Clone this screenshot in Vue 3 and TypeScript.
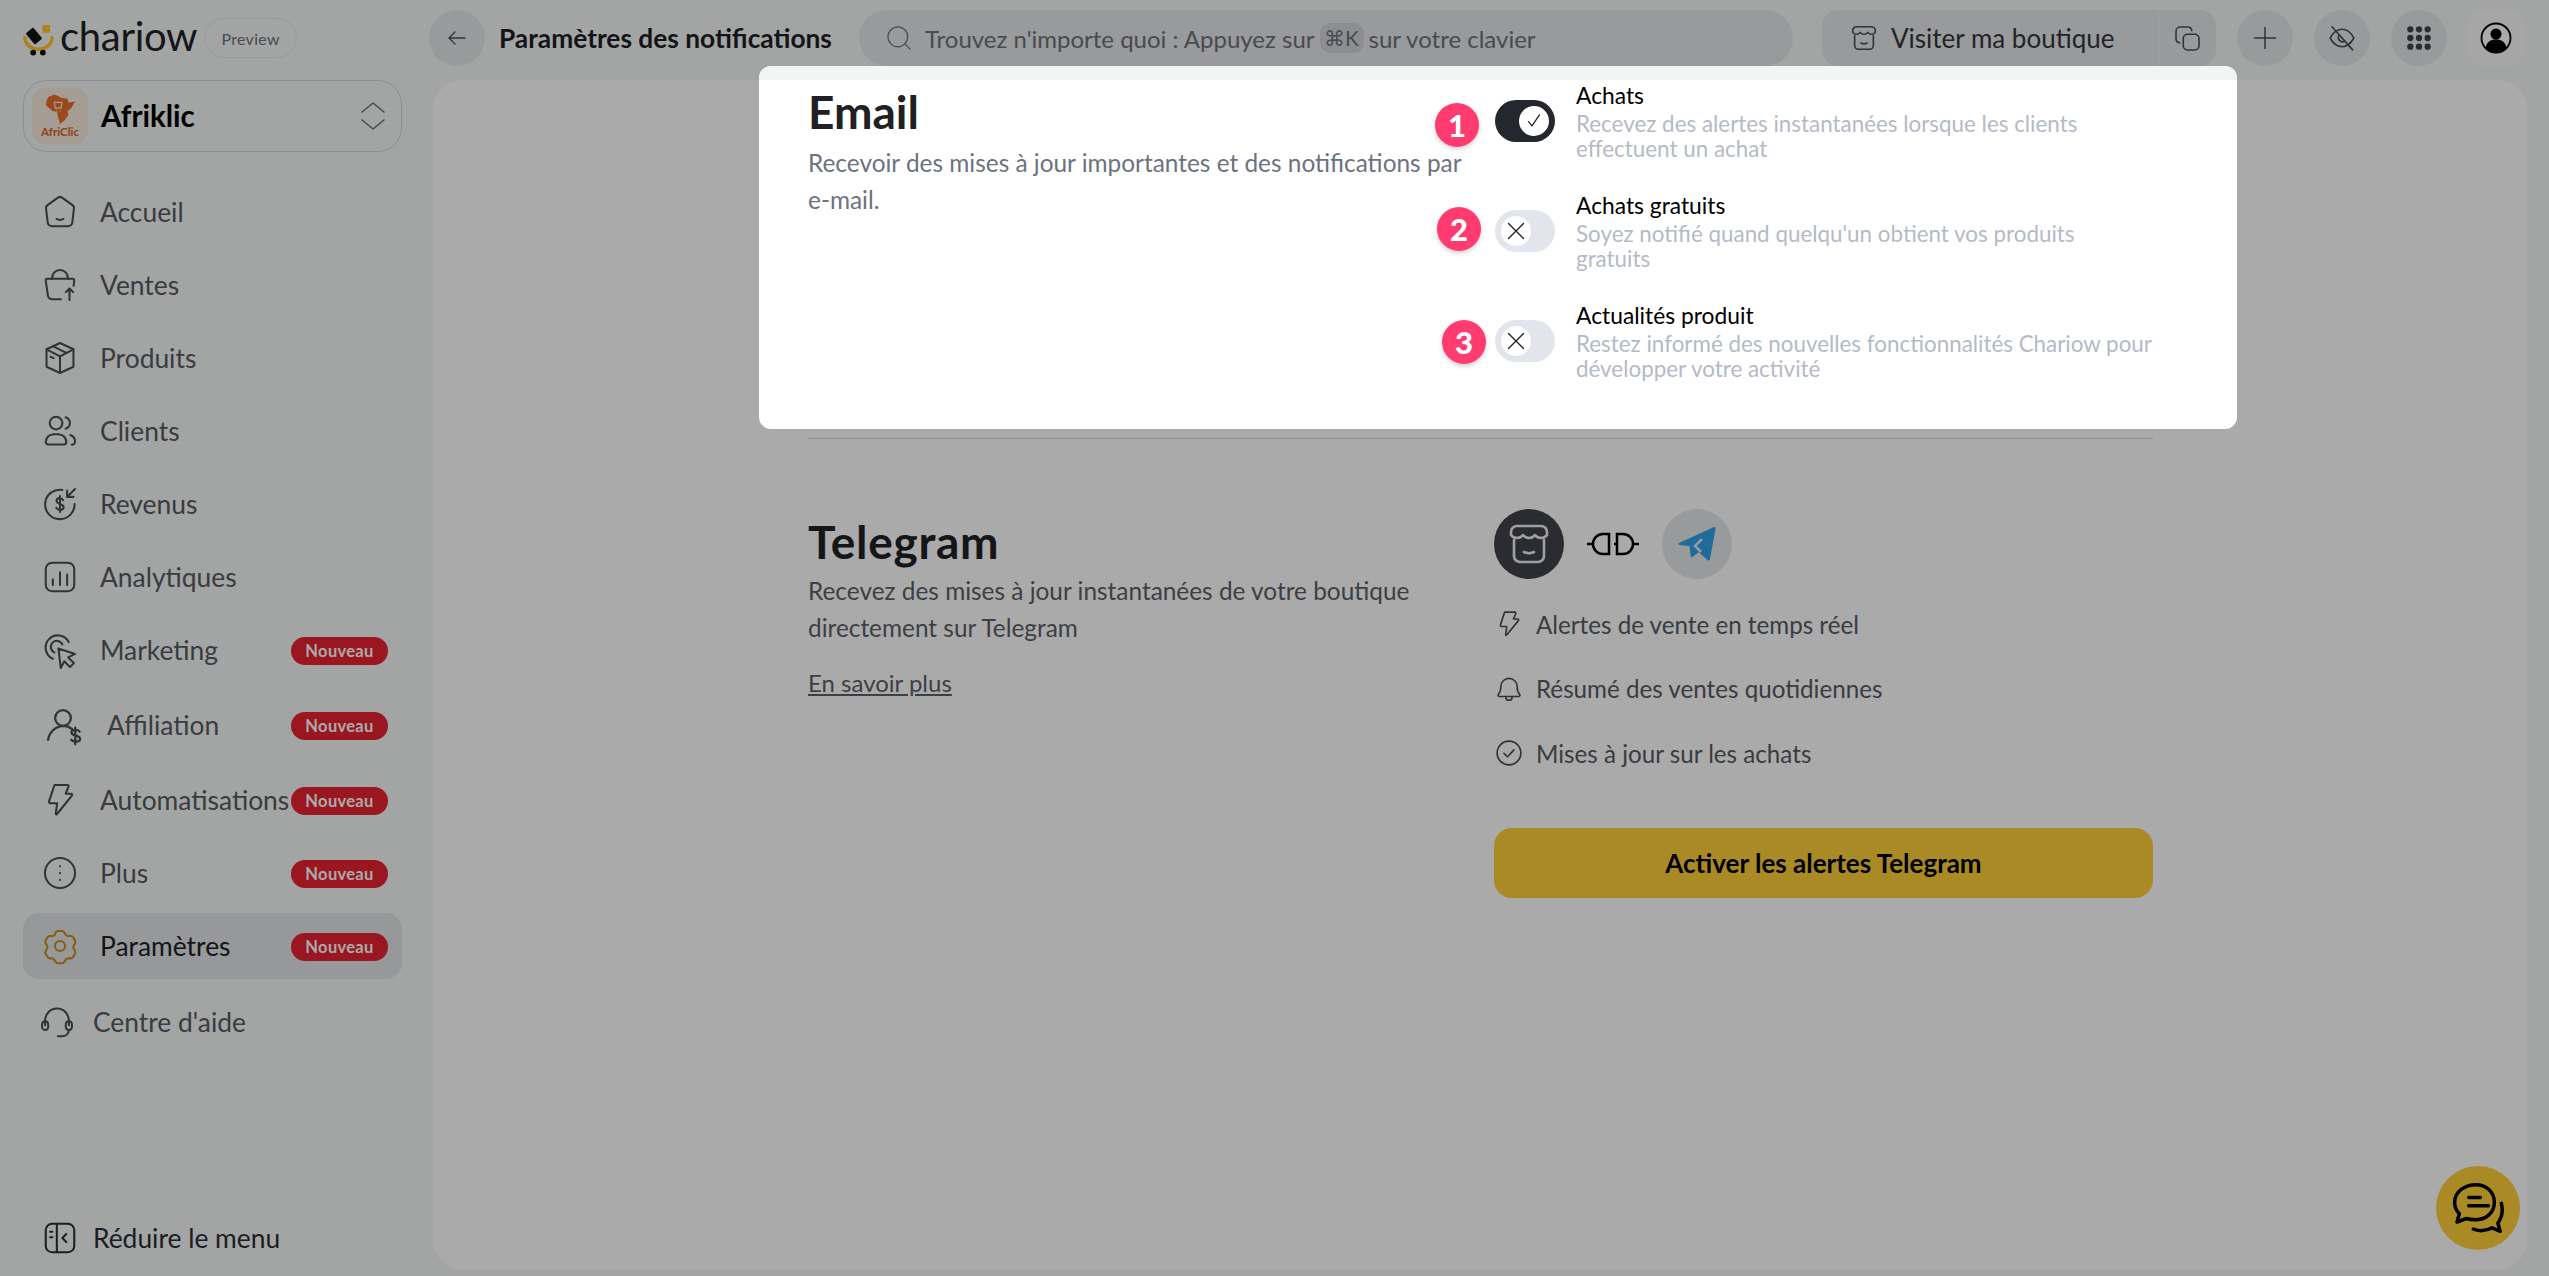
<script setup lang="ts">
interface NavItem {
  label: string
  icon: string[]
  badge?: boolean
  active?: boolean
  cls?: string
}

const nav: NavItem[] = [
  { label: 'Accueil', icon: ['M10.7 2.9a2.2 2.2 0 0 1 2.6 0l6.6 4.8a2.2 2.2 0 0 1 .9 2.1l-1 8.6a2.8 2.8 0 0 1-2.8 2.6H7a2.8 2.8 0 0 1-2.8-2.6l-1-8.6a2.2 2.2 0 0 1 .9-2.1z', 'M9.8 16.4c1.4.8 3 .8 4.4 0'] },
  { label: 'Ventes', icon: ['M12.5 21H7.3a3 3 0 0 1-3-2.6L3 9.2A1 1 0 0 1 4 8h16a1 1 0 0 1 1 1.1l-.4 3.4', 'M7 8c0-3.2 2-5.5 5-5.5S17 4.800 17 8', 'M18 21.500v-7M15.700 16.500l2.300-2.300 2.300 2.300'] },
  { label: 'Produits', icon: ['M12 2.500l8.500 4v11L12 21.500l-8.500-4v-11z', 'M3.500 6.500L12 11l8.500-4.500', 'M12 11v10.500', 'M7.500 4.500L16 8.800', 'M6 11.200l2 .9'] },
  { label: 'Clients', icon: ['M9.500 3a4 4 0 1 1 0 8 4 4 0 0 1 0-8z', 'M15.500 3.300a3.800 3.800 0 0 1 0 7.300', 'M8 14h3a5 5 0 0 1 5 5 1.500 1.500 0 0 1-1.500 1.500h-10A1.500 1.500 0 0 1 3 19a5 5 0 0 1 5-5z', 'M18.500 14.500a4.500 4.500 0 0 1 3 4.500 1.800 1.800 0 0 1-2 1.600'] },
  { label: 'Revenus', icon: ['M13.500 3.100A9.300 9.300 0 1 0 21.200 12', 'M21.500 2.500l-5 5M16.500 3.500v4h4', 'M14 9.600c-.5-1-1.200-1.300-2-1.300-1.300 0-2.200.7-2.200 1.700 0 2.500 4.500 1.400 4.500 4 0 1.100-1 1.700-2.300 1.700-1 0-1.800-.4-2.300-1.300M12 7v10'] },
  { label: 'Analytiques', icon: ['M7 3h10a4 4 0 0 1 4 4v10a4 4 0 0 1-4 4H7a4 4 0 0 1-4-4V7a4 4 0 0 1 4-4z', 'M7.500 13.500V17M12 9v8M16.500 10.500V17'] },
  { label: 'Marketing', badge: true, icon: ['M7.500 17.500A7.700 7.700 0 1 1 17.500 7', 'M8.500 13.500A3.800 3.800 0 1 1 13.500 8.500', 'M11 11l10.500 3.500-4.300 2.200 3.600 3.600-2.500 2.500-3.600-3.700-2.200 4.300z'] },
  { label: 'Affiliation', badge: true, cls: 'aff', icon: ['M12 3.500a4.500 4.500 0 1 1 0 9 4.500 4.500 0 0 1 0-9z', 'M3.500 20.500c.6-4.300 4-7.700 8.500-8 2 0 3.800.6 5.200 1.800', 'M21.500 15.800c-.6-.8-1.400-1-2.400-1-1.300 0-2.300.5-2.300 1.500 0 2.300 5 1.200 5 3.600 0 1-1.100 1.600-2.500 1.600-1 0-2-.3-2.600-1.100M19 13.500v9.500'] },
  { label: 'Automatisations', badge: true, icon: ['M8.500 2.500h8.200a.8.8 0 0 1 .7 1.100l-1.800 4.400h3.300a.8.8 0 0 1 .6 1.300L10 21a.4.4 0 0 1-.7-.3l.9-6.700H5.800a.8.8 0 0 1-.7-1.100z'] },
  { label: 'Plus', badge: true, icon: ['M12 2.500a9.500 9.500 0 1 1 0 19 9.500 9.500 0 0 1 0-19z', 'M12 7.700v.1M12 12v.1M12 16.300v.1'] },
  { label: 'Paramètres', badge: true, active: true, icon: ['M12 8.800a3.200 3.200 0 1 1 0 6.400 3.200 3.200 0 0 1 0-6.400z', 'M9.300 3.400c.4-.6 1-.9 1.600-.9h2.200c.6 0 1.200.3 1.600.9l.9 1.500c.3.500.9.800 1.500.8h1.700c.7 0 1.300.4 1.600 1l1.100 1.900c.3.600.3 1.300 0 1.800l-.9 1.500c-.3.500-.3 1.200 0 1.700l.9 1.500c.3.600.3 1.300 0 1.800l-1.100 1.900c-.3.600-.9 1-1.600 1h-1.700c-.6 0-1.200.3-1.500.8l-.9 1.400c-.4.600-1 .9-1.600.9h-2.200c-.6 0-1.200-.3-1.600-.9l-.9-1.400c-.3-.5-.9-.8-1.500-.8H5.600c-.7 0-1.300-.4-1.600-1l-1.100-1.900c-.3-.5-.3-1.200 0-1.800l.9-1.500c.3-.5.3-1.200 0-1.700l-.9-1.500c-.3-.5-.3-1.200 0-1.800L4 6.700c.3-.6.900-1 1.600-1h1.700c.6 0 1.200-.3 1.500-.8z'] },
  { label: "Centre d'aide", cls: 'help', icon: ['M4.500 14V11a7.500 7.500 0 0 1 15 0v3', 'M4.500 11.500c1.300 0 2 1.200 2 2.800s-.7 2.700-2 2.700-2-1.200-2-2.700.7-2.800 2-2.800z', 'M19.500 11.500c1.300 0 2 1.200 2 2.800s-.7 2.700-2 2.700-2-1.200-2-2.700.7-2.800 2-2.800z', 'M19.500 17c0 2.700-2 4-4.500 4h-2.500'] },
]

const collapseIcon = ['M7 3h10a4 4 0 0 1 4 4v10a4 4 0 0 1-4 4H7a4 4 0 0 1-4-4V7a4 4 0 0 1 4-4z', 'M10 3v18', 'M5.800 8h1.400M5.800 11.500h1.400', 'M16 9.500L13.500 12l2.500 2.500']

const storeIcon = ['M3 7.500V6a3 3 0 0 1 3-3h12a3 3 0 0 1 3 3v1.500c-1.500 2-4.500 2-6 0-1.500 2-4.500 2-6 0-1.500 2-4.500 2-6 0z', 'M4.500 10v8a3 3 0 0 0 3 3h9a3 3 0 0 0 3-3v-8', 'M9.500 16c1.600.8 3.400.8 5 0']

interface EmailOption {
  n: number
  title: string
  lines: string[]
  on: boolean
  left: number
  top: number
}

const emailOptions: EmailOption[] = [
  { n: 1, title: 'Achats', lines: ['Recevez des alertes instantanées lorsque les clients', 'effectuent un achat'], on: true, left: -60, top: 22 },
  { n: 2, title: 'Achats gratuits', lines: ["Soyez notifié quand quelqu'un obtient vos produits", 'gratuits'], on: false, left: -58, top: 16 },
  { n: 3, title: 'Actualités produit', lines: ['Restez informé des nouvelles fonctionnalités Chariow pour', 'développer votre activité'], on: false, left: -53, top: 19 },
]

const features = [
  { label: 'Alertes de vente en temps réel', icon: ['M8.500 2.500h8.200a.8.8 0 0 1 .7 1.100l-1.800 4.400h3.300a.8.8 0 0 1 .6 1.300L10 21a.4.4 0 0 1-.7-.3l.9-6.700H5.800a.8.8 0 0 1-.7-1.100z'] },
  { label: 'Résumé des ventes quotidiennes', icon: ['M5.500 10a6.500 6.500 0 0 1 13 0c0 3.200.8 5 2 6.300.5.600.2 1.700-.7 1.700H4.200c-.9 0-1.200-1.100-.7-1.700 1.200-1.300 2-3.100 2-6.300z', 'M9.500 18.500a2.500 2.500 0 0 0 5 0'] },
  { label: 'Mises à jour sur les achats', icon: ['M12 2.500a9.500 9.500 0 1 1 0 19 9.500 9.500 0 0 1 0-19z', 'M8 12.300l2.800 2.700L16 9.500'] },
]
</script>

<template>
  <div class="app">
    <div class="brand">
      <svg class="brand-mark" viewBox="0 0 32 34" width="31" height="33">
        <path d="M2 14a14 12 0 0 0 28 0" fill="none" stroke="#ffc62c" stroke-width="3.600" stroke-linecap="round" />
        <rect x="6" y="5" width="10" height="15" rx="1" fill="#111" transform="rotate(-40 11 12)" />
        <rect x="20" y="1" width="8" height="8" fill="#ffc62c" />
        <circle cx="10.500" cy="29.500" r="3" fill="#111" />
        <circle cx="20.500" cy="29.500" r="3" fill="#111" />
      </svg>
      <span class="brand-name">chariow</span>
      <span class="preview">Preview</span>
    </div>

    <header class="topbar">
      <button class="round">
        <svg viewBox="0 0 24 24" width="24" height="24" class="ico"><path d="M20 12H4M10 6l-6 6 6 6" /></svg>
      </button>
      <div class="page-title">Paramètres des notifications</div>
      <div class="search">
        <svg viewBox="0 0 24 24" width="28" height="28" class="ico thin"><circle cx="11" cy="11" r="8.500" /><path d="M17.500 17.500l4 4" /></svg>
        <span>Trouvez n'importe quoi : Appuyez sur</span>
        <kbd>⌘K</kbd>
        <span>sur votre clavier</span>
      </div>
      <div class="shop">
        <div class="shop-main">
          <svg viewBox="0 0 24 24" width="30" height="30" class="ico"><path v-for="d in storeIcon" :key="d" :d="d" /></svg>
          <span>Visiter ma boutique</span>
        </div>
        <div class="shop-copy">
          <svg viewBox="0 0 24 24" width="29" height="29" class="ico"><rect x="8.500" y="8.500" width="13" height="13" rx="3.500" /><path d="M5.500 15.500A3 3 0 0 1 2.500 12.500V6A3.500 3.500 0 0 1 6 2.500h6.500a3 3 0 0 1 3 3" /></svg>
        </div>
      </div>
      <button class="round">
        <svg viewBox="0 0 24 24" width="28" height="28" class="ico"><path d="M12 3v18M3 12h18" /></svg>
      </button>
      <button class="round">
        <svg viewBox="0 0 24 24" width="30" height="30" class="ico"><path d="M2.500 12c2.500-4.500 5.700-7 9.500-7s7 2.500 9.500 7c-2.500 4.500-5.700 7-9.500 7s-7-2.500-9.500-7z" /><path d="M9.500 10a3.500 3.500 0 0 0 4.700 4.700" /><path d="M4 3l16.500 18.500" /></svg>
      </button>
      <button class="round">
        <svg viewBox="0 0 24 24" width="26" height="26" class="grid-ico">
          <template v-for="y in [4, 12, 20]" :key="y">
            <circle v-for="x in [4, 12, 20]" :key="x" :cx="x" :cy="y" r="2.900" />
          </template>
        </svg>
      </button>
      <button class="avatar">
        <svg viewBox="0 0 32 32" width="32" height="32">
          <circle cx="16" cy="16" r="14.500" fill="#fff" stroke="#000" stroke-width="1.800" />
          <circle cx="16" cy="12" r="5.500" fill="#000" />
          <path d="M5.500 26c1-6 5-8.500 10.500-8.500S25.500 20 26.500 26a14.500 14.500 0 0 1-21 0z" fill="#000" />
        </svg>
      </button>
    </header>

    <aside class="sidebar">
      <div class="store">
        <div class="store-logo">
          <svg viewBox="0 0 40 34" width="38" height="32">
            <path d="M8 3l6-2.500 4 1.500 3 2 7 1 1 4 7-1-4 7-4 3 1 4-4 6-5 4-2-7-1-6-5-1-7-6 1-6z" fill="#e8702a" />
            <path d="M14 9h8l-1 6h-6zM16 18h.1M20 18h.1" fill="none" stroke="#f8ecdd" stroke-width="1.300" stroke-linecap="round" />
          </svg>
          <span>AfriClic</span>
        </div>
        <span class="store-name">Afriklic</span>
        <svg viewBox="0 0 24 28" width="24" height="28" class="ico chev"><path d="M1 10L12 1l11 9M1 18l11 9 11-9" /></svg>
      </div>

      <nav class="nav">
        <a v-for="item in nav" :key="item.label" class="nav-item" :class="[item.cls, { active: item.active }]">
          <svg viewBox="0 0 24 24" class="ico nav-icon">
            <path v-for="d in item.icon" :key="d" :d="d" />
          </svg>
          <span class="nav-label">{{ item.label }}</span>
          <span v-if="item.badge" class="badge">Nouveau</span>
        </a>
      </nav>

      <a class="nav-item collapse">
        <svg viewBox="0 0 24 24" class="ico nav-icon dark">
          <path v-for="d in collapseIcon" :key="d" :d="d" />
        </svg>
        <span class="nav-label">Réduire le menu</span>
      </a>
    </aside>

    <main class="panel">
      <hr class="divider" />
      <section class="telegram">
        <div class="tg-left">
          <h2 class="tg-title">Telegram</h2>
          <p>Recevez des mises à jour instantanées de votre boutique<br />directement sur Telegram</p>
          <a class="more">En savoir plus</a>
        </div>
        <div class="tg-right">
          <div class="link-row">
            <div class="disc dark-disc">
              <svg viewBox="0 0 24 24" width="48" height="48" class="ico light"><path v-for="d in storeIcon" :key="d" :d="d" /></svg>
            </div>
            <svg viewBox="0 0 52 24" width="52" height="24" class="plug"><path d="M0 12h6M22 2h-6a10 10 0 0 0 0 20h6zM30 2h6a10 10 0 0 1 0 20h-6zM30 12h-3M46 12h6" /></svg>
            <div class="disc">
              <svg viewBox="0 0 40 40" width="40" height="40"><path d="M2 19L37 3c1-.4 1.800.4 1.600 1.400L33 35c-.3 1.500-2 1.800-3 .8l-8-7.500-6.500 4.500c-.9.600-1.900 0-1.900-1l-1-9.500L2.500 21c-1-.4-1.300-1.500-.5-2z" fill="#2fa3e9" /><path d="M25 15l-7 7 6 6" fill="none" stroke="#e6e7ea" stroke-width="2.500" /></svg>
            </div>
          </div>
          <ul class="features">
            <li v-for="f in features" :key="f.label">
              <svg viewBox="0 0 24 24" width="30" height="30" class="ico"><path v-for="d in f.icon" :key="d" :d="d" /></svg>
              <span>{{ f.label }}</span>
            </li>
          </ul>
          <button class="activate">Activer les alertes Telegram</button>
        </div>
      </section>

      <button class="chat">
        <svg viewBox="0 0 48 48" width="56" height="56" class="ico chat-ico">
          <path d="M22 4c9 0 16 6 16 15s-7 15-16 15c-3 0-5 0-8-1l-8 3 2-7c-3-3-4-6-4-10C4 10 13 4 22 4z" />
          <path d="M16 15h10M16 22h17M44 20c2 8 0 13-3 17l2 7-7-3c-5 3-12 3-16 1" />
        </svg>
      </button>
    </main>

    <div class="overlay"></div>

    <div class="modal">
      <div class="modal-strip"></div>
      <div class="modal-body">
        <div class="email-left">
          <h2>Email</h2>
          <p>Recevoir des mises à jour importantes et des notifications par<br />e-mail.</p>
        </div>
        <div class="options">
          <div v-for="o in emailOptions" :key="o.n" class="option">
            <span class="step" :style="{ left: o.left + 'px', top: o.top + 'px' }">{{ o.n }}</span>
            <div class="toggle" :class="{ on: o.on }">
              <div class="knob">
                <svg v-if="o.on" viewBox="0 0 16 16" width="22" height="22" class="ico"><path d="M4 8.500l2.500 3 5.500-8" /></svg>
                <svg v-else viewBox="0 0 16 16" width="24" height="24" class="ico"><path d="M3 3l10 10M13 3L3 13" /></svg>
              </div>
            </div>
            <div class="option-text">
              <div class="option-title">{{ o.title }}</div>
              <div class="option-desc">
                <span v-for="l in o.lines" :key="l">{{ l }}</span>
              </div>
            </div>
          </div>
        </div>
      </div>
    </div>
  </div>
</template>

<style>
html, body {
  margin: 0;
  padding: 0;
  background: #f5f7f6;
}
</style>

<style scoped>
* {
  box-sizing: border-box;
}

.app {
  position: relative;
  width: 2549px;
  height: 1276px;
  overflow: hidden;
  display: grid;
  grid-template-columns: 429px 1fr;
  grid-template-rows: 80px 1fr;
  background: #f5f7f6;
  font-family: Lato, "Noto Sans", sans-serif;
  color: #565a60;
}

button {
  border: none;
  padding: 0;
  font-family: inherit;
  cursor: pointer;
}

.ico {
  fill: none;
  stroke: #4a4d52;
  stroke-width: 1.300;
  stroke-linecap: round;
  stroke-linejoin: round;
  flex-shrink: 0;
}

.ico.thin {
  stroke: #6d7178;
  stroke-width: 1.100;
}

.ico.light {
  stroke: #f0f0f0;
}

/* brand */
.brand {
  display: flex;
  align-items: center;
  padding-left: 23px;
  height: 76px;
}

.brand-mark {
  margin: 5px 6px 0 0;
}

.brand-name {
  font-size: 40px;
  line-height: 44px;
  color: #1f2226;
  letter-spacing: -0.3px;
  margin-top: -4px;
}

.preview {
  margin-left: 7px;
  width: 93px;
  height: 40px;
  border: 1px solid #e6e7e9;
  border-radius: 20px;
  display: flex;
  align-items: center;
  justify-content: center;
  font-size: 16px;
  color: #6d7178;
  letter-spacing: 0.3px;
}

/* top bar */
.topbar {
  display: flex;
  align-items: center;
  height: 76px;
  padding-right: 25px;
}

.round {
  width: 56px;
  height: 56px;
  border-radius: 50%;
  background: #e6e7ea;
  display: flex;
  align-items: center;
  justify-content: center;
  flex-shrink: 0;
  margin-left: 21px;
}

.round:first-child {
  margin-left: 0;
}

.grid-ico {
  fill: #3f4248;
}

.page-title {
  margin-left: 14px;
  width: 332px;
  font-size: 26.300px;
  font-weight: 700;
  color: #1d1f23;
  white-space: nowrap;
}

.search {
  margin-left: 28px;
  width: 934px;
  height: 56px;
  border-radius: 28px;
  background: #e6e7ea;
  display: flex;
  align-items: center;
  padding-left: 26px;
  gap: 5px;
  font-size: 24px;
  color: #6d7178;
  white-space: nowrap;
}

.search svg {
  margin-right: 7px;
}

kbd {
  font-family: inherit;
  font-size: 21px;
  background: #d4d6db;
  border-radius: 10px;
  width: 44px;
  height: 30px;
  display: flex;
  align-items: center;
  justify-content: center;
}

.shop {
  margin-left: 29px;
  width: 394px;
  height: 56px;
  border-radius: 16px;
  background: #e6e7ea;
  display: flex;
  align-items: center;
  flex-shrink: 0;
}

.shop-main {
  width: 337px;
  height: 100%;
  padding-left: 27px;
  display: flex;
  align-items: center;
  gap: 12px;
  font-size: 26px;
  color: #33363b;
  border-right: 1px solid #f2f3f5;
}

.shop-copy {
  flex: 1;
  display: flex;
  justify-content: center;
  align-items: center;
}

.avatar {
  width: 56px;
  height: 56px;
  margin-left: 21px;
  border-radius: 16px;
  background: #f9f9f9;
  display: flex;
  align-items: center;
  justify-content: center;
}

/* sidebar */
.sidebar {
  padding-left: 23px;
  width: 402px;
  display: flex;
  flex-direction: column;
}

.store {
  height: 72px;
  border: 1px solid #d4d6da;
  border-radius: 24px;
  display: flex;
  align-items: center;
  padding: 0 16px 0 8px;
  flex-shrink: 0;
}

.store-logo {
  width: 56px;
  height: 56px;
  border-radius: 14px;
  background: #f8ecdd;
  display: flex;
  flex-direction: column;
  align-items: center;
  justify-content: center;
  color: #d65f1c;
  font-size: 11.500px;
  font-weight: 700;
  line-height: 12px;
}

.store-name {
  margin: -2px 0 0 13px;
  flex: 1;
  font-size: 29.500px;
  font-weight: 700;
  color: #000;
}

.chev {
  stroke: #6d7178;
  stroke-width: 1.600;
}

.nav {
  display: flex;
  flex-direction: column;
  gap: 7px;
  margin-top: 27px;
}

.nav-item {
  height: 66px;
  display: flex;
  align-items: center;
  padding-left: 18px;
  border-radius: 16px;
  position: relative;
  flex-shrink: 0;
}

.nav-icon {
  width: 38px;
  height: 38px;
}

.nav-label {
  margin-left: 21px;
  font-size: 26.400px;
  white-space: nowrap;
}

.nav-item.active {
  background: #e3e4e7;
  color: #1f2125;
}

.active .nav-icon {
  stroke: #c98d1c;
}

.nav-item.aff {
  margin-top: 2px;
  padding-left: 19px;
}

.nav-item.aff .nav-icon {
  width: 42px;
  height: 42px;
}

.nav-item.aff .nav-label {
  margin-left: 23px;
}

.nav-item.aff + .nav-item {
  margin-top: 2px;
}

.nav-item.help {
  margin-top: 3px;
  padding-left: 15px;
}

.help .nav-label {
  margin-left: 17px;
}

.badge {
  position: absolute;
  left: 268px;
  top: 20px;
  width: 97px;
  height: 28px;
  border-radius: 14px;
  background: #e82230;
  color: #fff;
  font-size: 16.500px;
  font-weight: 700;
  letter-spacing: 0.3px;
  display: flex;
  align-items: center;
  justify-content: center;
}

.nav-item.collapse {
  margin-top: auto;
  margin-bottom: 5px;
  color: #2c2e33;
}

.collapse .nav-label {
  margin-left: 14px;
}

.nav-icon.dark {
  stroke: #2c2e33;
}

/* main panel */
.panel {
  position: relative;
  background: #fff;
  margin: 0 22px 6px 4px;
  border-radius: 30px;
  padding: 358px 374px 0 375px;
}

.divider {
  margin: 0;
  border: none;
  border-top: 1px solid #d5d7da;
}

.telegram {
  display: flex;
  padding-top: 70px;
}

.tg-left {
  width: 686px;
  padding-top: 5px;
}

h2 {
  margin: 0;
  font-size: 46px;
  line-height: 56px;
  font-weight: 700;
  color: #1f2125;
}

.tg-title {
  letter-spacing: 0.7px;
}

.tg-left p {
  margin: 2px 0 0;
  font-size: 24.400px;
  line-height: 37px;
  color: #5c5f66;
}

.more {
  display: inline-block;
  margin-top: 22px;
  font-size: 24px;
  line-height: 30px;
  color: #5c5f66;
  text-decoration: underline;
}

.tg-right {
  flex: 1;
}

.link-row {
  display: flex;
  align-items: center;
  gap: 23px;
}

.disc {
  width: 70px;
  height: 70px;
  border-radius: 50%;
  background: #e6e7ea;
  display: flex;
  align-items: center;
  justify-content: center;
}

.dark-disc {
  background: #41434a;
}

.plug {
  fill: none;
  stroke: #000;
  stroke-width: 2.500;
}

.features {
  list-style: none;
  margin: 30px 0 0;
  padding: 0;
  display: flex;
  flex-direction: column;
  gap: 34.500px;
}

.features li {
  display: flex;
  align-items: center;
  height: 30px;
  gap: 12px;
  font-size: 24.200px;
  color: #565a60;
}

.activate {
  margin-top: 60px;
  width: 100%;
  height: 70px;
  border-radius: 18px;
  background: #ffcf38;
  color: #000;
  font-size: 26px;
  font-weight: 700;
}

.chat {
  position: absolute;
  right: 7px;
  bottom: 20px;
  width: 84px;
  height: 84px;
  border-radius: 50%;
  background: #ffcf38;
  display: flex;
  align-items: center;
  justify-content: center;
}

.chat-ico {
  stroke: #000;
  stroke-width: 3;
}

/* overlay + highlighted card */
.overlay {
  position: absolute;
  inset: 0;
  background: rgba(0, 0, 0, 0.333);
}

.modal {
  position: absolute;
  left: 759px;
  top: 66px;
  width: 1478px;
  height: 363px;
  background: #fff;
  border-radius: 12px;
  overflow: hidden;
}

.modal-strip {
  height: 14px;
  background: #f3f5f4;
}

.modal-body {
  display: flex;
}

.email-left {
  width: 736px;
  padding: 4px 0 0 49px;
}

.email-left p {
  margin: 4px 0 0;
  font-size: 24.400px;
  line-height: 37px;
  color: #6b7280;
  white-space: nowrap;
}

.options {
  display: flex;
  flex-direction: column;
  gap: 30px;
  padding-top: 1px;
}

.option {
  position: relative;
  display: flex;
  gap: 21px;
  height: 80px;
}

.step {
  position: absolute;
  width: 44px;
  height: 44px;
  border-radius: 50%;
  background: #ff3b70;
  color: #fff;
  font-size: 31px;
  font-weight: 900;
  display: flex;
  align-items: center;
  justify-content: center;
  box-shadow: 0 2px 5px rgba(0, 0, 0, 0.2);
}

.toggle {
  width: 60px;
  height: 42px;
  margin-top: 19px;
  border-radius: 21px;
  background: #e2e5eb;
  padding: 0 6px;
  display: flex;
  align-items: center;
  flex-shrink: 0;
}

.toggle.on {
  background: #24272e;
  justify-content: flex-end;
}

.knob {
  width: 30px;
  height: 30px;
  border-radius: 50%;
  background: #fff;
  display: flex;
  align-items: center;
  justify-content: center;
}

.knob .ico {
  stroke: #1d1f23;
  stroke-width: 0.900;
}

.option-title {
  font-size: 22.800px;
  line-height: 28px;
  color: #000;
  white-space: nowrap;
}

.option-desc {
  margin-top: 1.500px;
  font-size: 22.400px;
  line-height: 25px;
  color: #b4bac6;
  white-space: nowrap;
}

.option-desc span {
  display: block;
}
</style>
